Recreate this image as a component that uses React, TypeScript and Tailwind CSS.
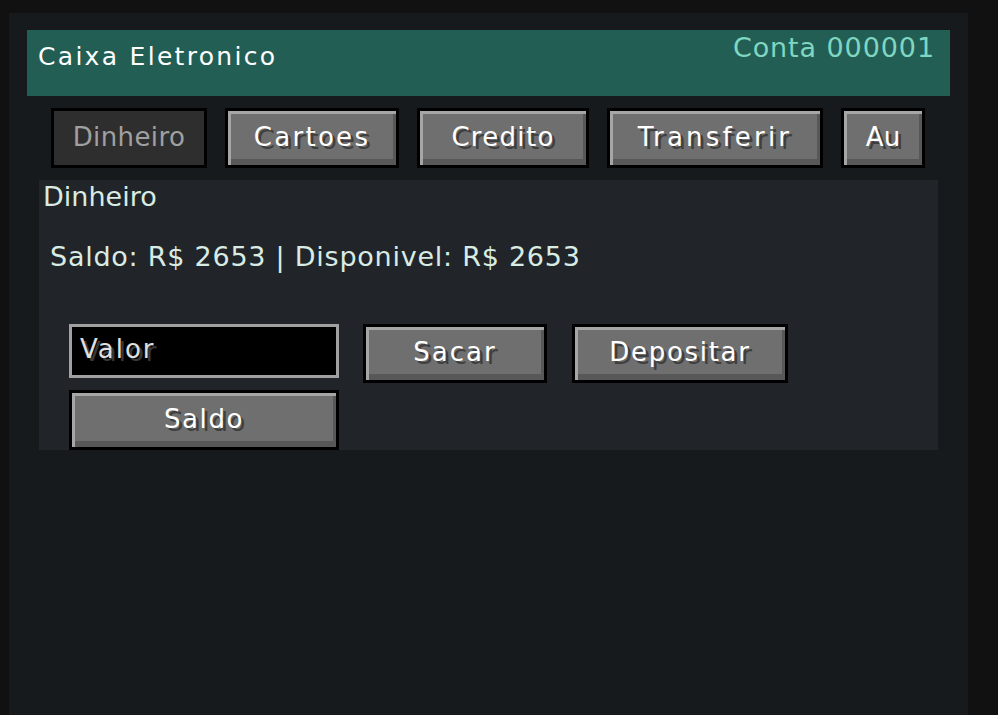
import { useState } from 'react';

type Tab = { label: string; width: string; tracking: string };

const tabs: Tab[] = [
  { label: 'Dinheiro', width: 'w-[156px]', tracking: 'tracking-[0.4px]' },
  { label: 'Cartoes', width: 'w-[174px]', tracking: 'tracking-[2.3px]' },
  { label: 'Credito', width: 'w-[172px]', tracking: 'tracking-[1.3px]' },
  { label: 'Transferir', width: 'w-[216px]', tracking: 'tracking-[3.2px]' },
  { label: 'Au', width: 'w-[84px]', tracking: 'tracking-[0px]' },
];

function McButton({
  label,
  className,
  tracking,
  disabled,
  onClick,
}: {
  label: string;
  className: string;
  tracking: string;
  disabled?: boolean;
  onClick?: () => void;
}) {
  return (
    <button
      onClick={onClick}
      disabled={disabled}
      className={`${className} shrink-0 border-[3px] border-black bg-black p-0`}
    >
      <div
        className={`flex h-full w-full items-center justify-center pb-[3px] text-[26px] leading-none ${tracking} ${
          disabled
            ? 'bg-[#2e2e2e] text-[#a0a0a0]'
            : 'bg-[#6f6f6f] text-white shadow-[inset_3px_3px_0_#a6a6a6,inset_-3px_-6px_0_#585858] [text-shadow:3px_3px_0_#3f3f3f]'
        }`}
      >
        {label}
      </div>
    </button>
  );
}

export default function App() {
  const [active, setActive] = useState('Dinheiro');
  const [valor, setValor] = useState('');

  return (
    <div className="h-[715px] w-full overflow-hidden bg-[#111111] pl-[9px] pt-[13px] font-['DejaVu_Sans',sans-serif]">
      <div className="h-full w-[959px] bg-[#171a1d] px-[18px] pt-[17px]">
        {/* Header */}
        <div className="flex h-[66px] w-[923px] items-start justify-between bg-[#235e55] pl-[11px] pr-[15px]">
          <span className="mt-[14px] text-[25px] leading-none tracking-[2.3px] text-white">
            Caixa Eletronico
          </span>
          <span className="mt-[4px] text-[27px] leading-none tracking-[0.9px] text-[#7fd6c1]">
            Conta 000001
          </span>
        </div>

        {/* Tabs */}
        <div className="mt-[12px] flex gap-[18px] pl-[24px]">
          {tabs.map((t) => (
            <McButton
              key={t.label}
              label={t.label}
              className={`${t.width} h-[60px]`}
              tracking={t.tracking}
              disabled={active === t.label}
              onClick={() => setActive(t.label)}
            />
          ))}
        </div>

        {/* Dinheiro panel */}
        <div className="ml-[12px] mt-[12px] h-[270px] w-[899px] bg-[#212529] text-[#d9ece3]">
          <div className="pl-[4px] pt-[3px] text-[27px] leading-none">{active}</div>
          <div className="mt-[33px] pl-[11px] text-[27px] leading-none tracking-[0.75px]">
            Saldo: R$ 2653 | Disponivel: R$ 2653
          </div>

          <div className="ml-[30px] mt-[54px] flex items-start">
            <div className="h-[54px] w-[270px] border-[3px] border-[#a0a0a0] bg-black">
              <input
                value={valor}
                onChange={(e) => setValor(e.target.value)}
                placeholder="Valor"
                className="h-full w-full bg-transparent pb-[4px] pl-[8px] text-[26px] leading-none tracking-[2px] text-[#e0e0e0] outline-none placeholder:text-[#e0e0e0] [text-shadow:3px_3px_0_#383838]"
              />
            </div>
            <McButton label="Sacar" className="ml-[24px] h-[59px] w-[184px]" tracking="tracking-[2px]" />
            <McButton label="Depositar" className="ml-[25px] h-[59px] w-[216px]" tracking="tracking-[1.7px]" />
          </div>
          <McButton label="Saldo" className="mt-[7px] ml-[30px] h-[60px] w-[270px]" tracking="tracking-[1.6px]" />
        </div>
      </div>
    </div>
  );
}
